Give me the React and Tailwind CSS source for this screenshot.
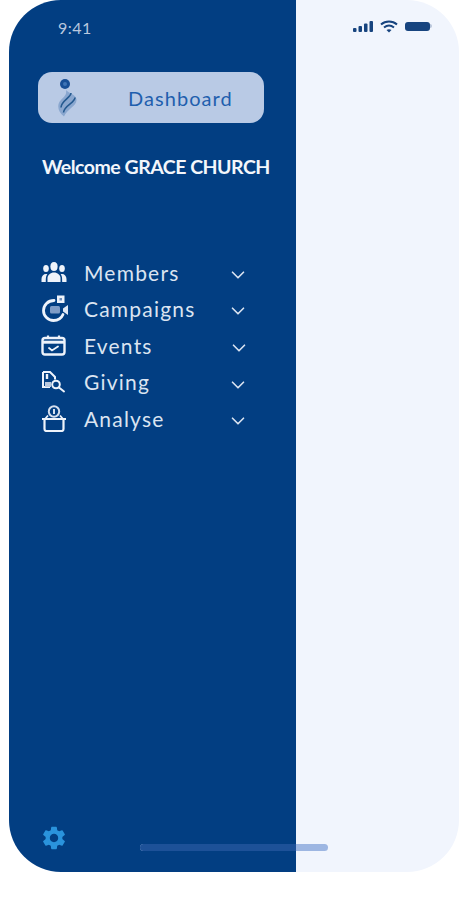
import React from "react";
import { ChevronDown } from "lucide-react";
import { MdSettings } from "react-icons/md";

function MembersIcon() {
  return (
    <svg width="26" height="21" viewBox="0 0 26 21" fill="#eef3fb">
      <ellipse cx="13" cy="4.500" rx="3.600" ry="4.500" />
      <ellipse cx="5" cy="6.500" rx="2.800" ry="3.500" />
      <ellipse cx="21" cy="6.500" rx="2.800" ry="3.500" />
      <path d="M6.500 20v-4c0-3 3-5.500 6.500-5.500s6.500 2.500 6.500 5.500v4z" />
      <path d="M0.500 20v-3c0-3 2-5 4.500-5 .6 0 1 .1 1.400.3C5 13.800 4.800 15.500 4.800 20zM25.500 20v-3c0-3-2-5-4.500-5-.6 0-1 .1-1.400.3 1.400 1.500 1.600 3.200 1.600 7.700z" />
    </svg>
  );
}

function CampaignIcon() {
  return (
    <svg width="30" height="28" viewBox="0 0 30 28" fill="none">
      <path d="M13 5.500C7 5.500 2.500 10 2.500 15.500S7 25.500 12.500 25.500c4.500 0 8-2.500 9.500-6" stroke="#eef3fb" strokeWidth="2.800" strokeLinecap="round" />
      <rect x="16" y="0.500" width="7.500" height="7.500" fill="#eef3fb" />
      <rect x="18.500" y="3" width="2.500" height="2.500" fill="#6f8fbc" />
      <rect x="9" y="11" width="10" height="7.500" rx="1.500" fill="#7f9cc6" />
      <path d="M22 13.500l5-3.500v10l-5-3.500z" fill="#dfe8f5" />
    </svg>
  );
}

function CalendarIcon() {
  return (
    <svg width="25" height="21" viewBox="0 0 25 21" fill="none">
      <rect x="1.500" y="3" width="22" height="16.500" rx="2.500" stroke="#eef3fb" strokeWidth="2.400" />
      <path d="M1.500 7.200h22" stroke="#eef3fb" strokeWidth="3" />
      <path d="M7 0.500v3M18 0.500v3" stroke="#eef3fb" strokeWidth="2.200" />
      <path d="M8 13l3 2.500 6-4" stroke="#eef3fb" strokeWidth="1.800" strokeLinecap="round" />
    </svg>
  );
}

function GivingIcon() {
  return (
    <svg width="25" height="22" viewBox="0 0 25 22" fill="none">
      <path d="M2 1h7l5 5v2.500M2 1v15h7" stroke="#eef3fb" strokeWidth="2" />
      <path d="M4 11h6v5H4z" fill="#b9c8de" />
      <path d="M6 3v5" stroke="#eef3fb" strokeWidth="2.400" />
      <circle cx="15" cy="13.500" r="3.800" stroke="#eef3fb" strokeWidth="2" />
      <path d="M18 16.500l5 4" stroke="#eef3fb" strokeWidth="2" strokeLinecap="round" />
    </svg>
  );
}

function AnalyseIcon() {
  return (
    <svg width="26" height="27" viewBox="0 0 26 27" fill="none">
      <circle cx="13" cy="6.500" r="5.200" stroke="#d5dfee" strokeWidth="2" />
      <path d="M13 4v5" stroke="#eef3fb" strokeWidth="1.800" />
      <path d="M1 14h24M3.500 14v10a2 2 0 0 0 2 2h15a2 2 0 0 0 2-2V14" stroke="#eef3fb" strokeWidth="2.200" />
      <path d="M4 14l3-3.500M22 14l-3-3.500" stroke="#eef3fb" strokeWidth="1.800" />
    </svg>
  );
}

function LogoMark() {
  return (
    <svg width="22" height="38" viewBox="0 0 22 38" fill="none">
      <circle cx="8" cy="5" r="5" fill="#184f96" />
      <circle cx="8" cy="5" r="2" fill="#3f74b5" />
      <path d="M9 11c2 3 10 4.500 10.500 9.500C20 27 10 30 7 37.500 1 33 -0.500 26 3.500 21.500 7 18 10 16 9 11z" fill="#8aa7cf" />
      <path d="M14 14c0 4.500-10 8-10 14.500M18 18.500c0 5.500-11 8-11.500 15" stroke="#24598f" strokeWidth="1.600" />
    </svg>
  );
}

const menu = [
  { label: "Members", icon: <MembersIcon />, chevron: "ml-[-1px]" },
  { label: "Campaigns", icon: <CampaignIcon />, chevron: "ml-[-1px]" },
  { label: "Events", icon: <CalendarIcon />, chevron: "ml-0" },
  { label: "Giving", icon: <GivingIcon />, chevron: "ml-[-1px]" },
  { label: "Analyse", icon: <AnalyseIcon />, chevron: "ml-[-1px]" },
];

export default function App() {
  return (
    <div className="h-[900px] w-[459px] overflow-hidden bg-white font-['Lato',sans-serif]">
      <div className="relative ml-[9px] flex h-[872px] w-[450px] overflow-hidden rounded-[52px] bg-[#f1f5fd]">
        {/* Sidebar */}
        <div className="flex h-full w-[287px] flex-col bg-[#023e82] pl-[29px]">
          <div className="pl-[20px] pt-[18px] text-[16px] leading-5 tracking-[0.5px] text-[#b9c8de]">9:41</div>

          <div className="mt-[34px] flex h-[51px] w-[226px] items-center rounded-[14px] bg-[#b9cae5] pl-[19px]">
            <LogoMark />
            <span className="ml-[49px] text-[20px] tracking-[1.050px] text-[#1f5fae]">Dashboard</span>
          </div>

          <div className="ml-[4px] mt-[32px] whitespace-nowrap text-[19.500px] font-bold leading-6 tracking-[-0.500px] text-[#f3f6fb]">
            Welcome GRACE CHURCH
          </div>

          <div className="mt-[75px] flex flex-col">
            {menu.map((item) => (
              <div key={item.label} className="flex h-[36.600px] items-center">
                <div className="flex w-[46px] shrink-0 items-center pl-[3px]">{item.icon}</div>
                <span className="w-[144px] text-[21px] tracking-[1.200px] text-[#dbe4f1]">{item.label}</span>
                <ChevronDown size={22} strokeWidth={1.800} color="#dbe4f1" className={`mt-[5px] ${item.chevron}`} />
              </div>
            ))}
          </div>

          <div className="mb-[20px] ml-[2px] mt-auto">
            <MdSettings size={28} color="#2a93dc" />
          </div>
        </div>

        {/* Status icons */}
        <div className="flex flex-1 justify-end pr-[27px] pt-[19px]">
          <div className="flex h-[14px] items-center gap-[6px]">
            <svg width="21" height="11" viewBox="0 0 21 11" fill="#17447f">
              <rect x="0" y="7" width="3.500" height="4" rx="1" />
              <rect x="5.500" y="5" width="3.500" height="6" rx="1" />
              <rect x="11" y="2.500" width="3.500" height="8.500" rx="1" />
              <rect x="16.500" y="0" width="3.500" height="11" rx="1" />
            </svg>
            <svg width="18" height="13" viewBox="0 0 18 13" fill="none" stroke="#17447f" strokeWidth="2">
              <path d="M1 4.500c4.500-4 11.500-4 16 0" />
              <path d="M4 7.500c3-2.500 7-2.500 10 0" />
              <path d="M9 12.500l-2.500-2.500c1.500-1 3.500-1 5 0z" fill="#17447f" stroke="none" />
            </svg>
            <div className="ml-[1px] flex items-center">
              <div className="h-[9px] w-[25px] rounded-[3px] bg-[#17447f]" />
              <div className="h-[4px] w-[2px] rounded-r-sm bg-[#b8c5da]" />
            </div>
          </div>
        </div>

        {/* Home indicator over both panels */}
        <div className="absolute left-[131px] top-[844px] h-[7px] w-[188px] overflow-hidden rounded-full bg-[#9db6e2]">
          <div className="h-full w-[156px] bg-[#1d5198]" />
        </div>
      </div>
    </div>
  );
}
